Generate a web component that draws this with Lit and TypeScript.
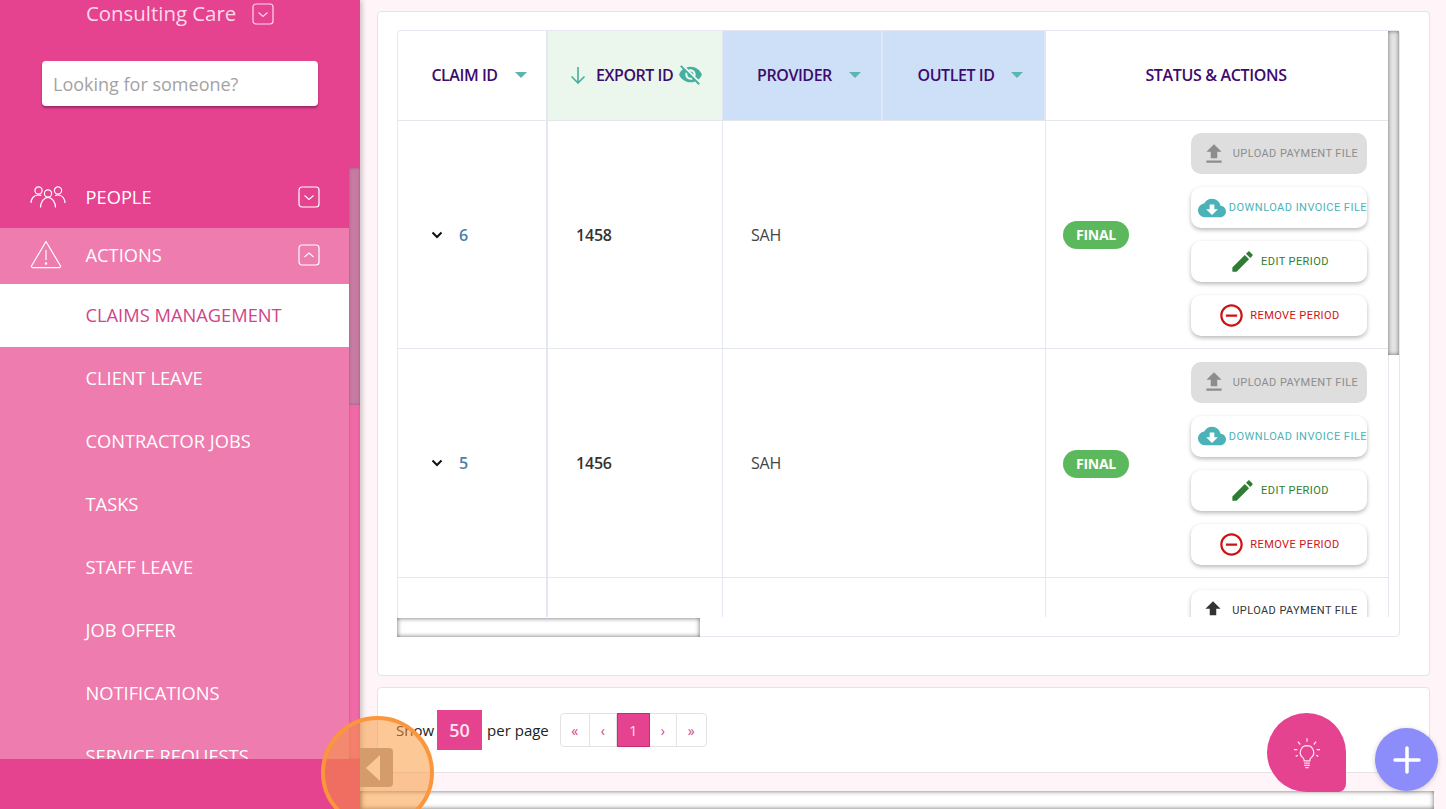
import { LitElement, html, css, svg } from 'lit';
import { customElement } from 'lit/decorators.js';

const ICONS = {
  upload: 'M9 16h6v-6h4l-7-7-7 7h4zm-4 2h14v2H5z',
  cloud: 'M19.35 10.04C18.67 6.59 15.64 4 12 4 9.11 4 6.6 5.64 5.35 8.04 2.34 8.36 0 10.91 0 14c0 3.31 2.69 6 6 6h13c2.76 0 5-2.24 5-5 0-2.64-2.05-4.78-4.65-4.96zM17 13l-5 5-5-5h3V9h4v4h3z',
  edit: 'M3 17.25V21h3.75L17.81 9.94l-3.75-3.75L3 17.25zM20.71 7.04c.39-.39.39-1.02 0-1.41l-2.34-2.34c-.39-.39-1.02-.39-1.41 0l-1.83 1.83 3.75 3.75 1.83-1.83z',
  remove: 'M7 11v2h10v-2H7zm5-9C6.48 2 2 6.48 2 12s4.48 10 10 10 10-4.48 10-10S17.52 2 12 2zm0 18c-4.41 0-8-3.59-8-8s3.59-8 8-8 8 3.59 8 8-3.59 8-8 8z',
  eyeOff: 'M12 7c2.76 0 5 2.24 5 5 0 .65-.13 1.26-.36 1.83l2.92 2.92c1.51-1.26 2.7-2.89 3.43-4.75-1.73-4.39-6-7.5-11-7.5-1.4 0-2.74.25-3.98.7l2.16 2.16C10.74 7.13 11.35 7 12 7zM2 4.27l2.28 2.28.46.46C3.08 8.3 1.78 10.02 1 12c1.73 4.39 6 7.5 11 7.5 1.55 0 3.03-.3 4.38-.84l.42.42L19.73 22 21 20.73 3.27 3 2 4.27zM7.53 9.8l1.55 1.55c-.05.21-.08.43-.08.65 0 1.66 1.34 3 3 3 .22 0 .44-.03.65-.08l1.55 1.55c-.67.33-1.41.53-2.2.53-2.76 0-5-2.24-5-5 0-.79.2-1.53.53-2.2zm4.31-.78l3.15 3.15.02-.16c0-1.66-1.34-3-3-3l-.17.01z',
};

const SUB_ITEMS = ['CLIENT LEAVE', 'CONTRACTOR JOBS', 'TASKS', 'STAFF LEAVE', 'JOB OFFER', 'NOTIFICATIONS', 'SERVICE REQUESTS'];
const ROWS = [
  { claim: '6', exportId: '1458', provider: 'SAH' },
  { claim: '5', exportId: '1456', provider: 'SAH' },
];

const boxIcon = (up: boolean) => html`<svg class="box" viewBox="0 0 22 22" fill="none" stroke="currentColor">
  <rect x="1" y="1" width="20" height="20" rx="3" stroke-width="1.2"></rect>
  <path d=${up ? 'M6.5 13 11 9l4.5 4' : 'M6.5 9.5 11 13.5l4.5-4'} stroke-width="1.1"></path>
</svg>`;

const mat = (name: keyof typeof ICONS, size: number) => html`<svg width=${size} height=${size} viewBox="0 0 24 24" fill="currentColor">${svg`<path d=${ICONS[name]}></path>`}</svg>`;

@customElement('app-root')
export class AppRoot extends LitElement {
  static styles = css`
    :host {
      display: flex;
      width: 1446px;
      height: 809px;
      position: relative;
      overflow: hidden;
      background: #fff5f8;
      font-family: 'Open Sans', sans-serif;
      color: #333;
    }

    /* sidebar */
    .sidebar {
      width: 360px;
      flex: none;
      display: flex;
      flex-direction: column;
      background: #e54290;
      box-shadow: 2px 0 5px rgba(0, 0, 0, 0.22);
      z-index: 1;
    }
    .brand {
      height: 168px;
      flex: none;
      box-sizing: border-box;
      color: #ffd9ea;
    }
    .brand-title {
      display: flex;
      align-items: center;
      gap: 16px;
      padding-left: 86px;
      height: 28px;
      font-size: 20.4px;
    }
    .brand-title span {
      position: relative;
      top: -1px;
    }
    .search {
      margin: 33px 0 0 42px;
      width: 276px;
      height: 45px;
      box-sizing: border-box;
      padding: 0 11px;
      display: flex;
      align-items: center;
      background: #fff;
      border-radius: 4px;
      box-shadow: 0 2px 2px rgba(90, 20, 60, 0.5);
      font-size: 18px;
      color: #a3a3a3;
    }
    .box {
      width: 22px;
      height: 22px;
      flex: none;
    }
    .nav-wrap {
      flex: 1;
      min-height: 0;
      display: flex;
    }
    .nav {
      width: 349px;
      flex: none;
      overflow: hidden;
      color: #fff;
    }
    .group {
      display: flex;
      align-items: center;
      font-size: 18.3px;
      padding-right: 29px;
      box-sizing: border-box;
    }
    .group.people {
      height: 60px;
      padding-bottom: 3px;
    }
    .group.actions {
      height: 56px;
      padding-bottom: 3px;
      background: #ee7cae;
    }
    .group-icon {
      width: 85.5px;
      flex: none;
      display: flex;
      padding-left: 30px;
      box-sizing: border-box;
    }
    .group span {
      flex: 1;
    }
    .sub-list {
      background: #ee7cae;
    }
    .sub {
      height: 63px;
      box-sizing: border-box;
      padding: 0 0 2px 85.5px;
      display: flex;
      align-items: center;
      font-size: 18.3px;
    }
    .sub.active {
      background: #fff;
      color: #d14488;
    }
    .side-scroll {
      width: 11px;
      flex: none;
      background: #f06aa8;
      box-shadow: inset 0 0 3px rgba(170, 60, 110, 0.55);
    }
    .side-thumb {
      height: 237px;
      background: #c77ba2;
      box-shadow: inset 0 0 3px rgba(90, 60, 80, 0.5);
    }
    .side-foot {
      height: 50px;
      flex: none;
      background: #e54290;
    }

    /* main */
    .main {
      flex: 1;
      min-width: 0;
      display: flex;
      flex-direction: column;
    }
    .content {
      flex: 1;
      min-height: 0;
      display: flex;
      flex-direction: column;
      gap: 11px;
      padding: 11px 16px 0 17px;
    }
    .card {
      background: #fff;
      border: 1px solid #e8e2e6;
      border-radius: 4px;
      box-sizing: border-box;
    }
    .table-card {
      height: 665px;
      padding: 18px 29px 0 19px;
    }
    .frame {
      height: 607px;
      border: 1px solid #e4e6f4;
      border-radius: 4px;
      box-sizing: border-box;
      display: grid;
      grid-template-columns: 990px 11px;
      grid-template-rows: 586px 19px;
    }
    .viewport {
      overflow: hidden;
    }
    .row {
      display: grid;
      grid-template-columns: 150px 175px 323px 342px;
      border-bottom: 1px solid #e4e6ee;
    }
    .row.head {
      grid-template-columns: 150px 175px 160px 163px 342px;
      height: 89px;
      color: #3d0a6e;
    }
    .row.body {
      height: 228px;
    }
    .row.head + .row.body {
      height: 227px;
    }
    .cell {
      display: flex;
      align-items: center;
      box-sizing: border-box;
      border-right: 1px solid #e4e6f4;
      font-size: 16px;
      letter-spacing: -0.2px;
    }
    .cell:first-child {
      border-right-width: 2px;
    }
    .cell:last-child {
      border-right: 0;
    }
    .head .cell {
      justify-content: center;
      font-size: 16px;
      font-weight: 600;
      letter-spacing: -0.45px;
      padding-bottom: 2px;
    }
    .head .sortable {
      padding-left: 14px;
    }
    .head .wide {
      letter-spacing: -0.35px;
      padding-right: 2px;
    }
    .head .exported {
      background: #ebf7ec;
      justify-content: flex-start;
      padding-left: 21px;
      gap: 9px;
    }
    .head .filtered {
      background: #cde0f8;
      border-right: 2px solid #e0e6f6;
    }
    .caret {
      width: 0;
      height: 0;
      margin-left: 17px;
      border: 6px solid transparent;
      border-top: 6px solid #5bb5ab;
      border-bottom: 0;
    }
    .teal {
      display: flex;
      color: #45ae9f;
      flex: none;
      margin-left: -4px;
    }
    .claim {
      padding-left: 33px;
      gap: 16px;
      font-weight: 600;
      color: #4b80a8;
    }
    .claim svg {
      flex: none;
    }
    .export {
      padding-left: 28px;
      font-weight: 600;
    }
    .provider {
      padding-left: 28px;
      color: #444;
    }
    .status {
      padding-left: 17px;
      padding-right: 21px;
      justify-content: space-between;
    }
    .badge {
      width: 66px;
      height: 28px;
      margin-top: 1px;
      border-radius: 14px;
      background: #5cb85c;
      color: #fff;
      font-size: 14px;
      font-weight: 700;
      letter-spacing: -0.3px;
      display: flex;
      align-items: center;
      justify-content: center;
      padding-bottom: 1px;
      box-sizing: border-box;
    }
    .actions-col {
      display: flex;
      flex-direction: column;
      gap: 13px;
    }
    .btn {
      width: 176px;
      height: 41px;
      flex: none;
      box-sizing: border-box;
      border-radius: 10px;
      background: #fff;
      box-shadow: 0 2px 4px rgba(0, 0, 0, 0.28);
      display: flex;
      align-items: center;
      justify-content: center;
      gap: 6px;
      font-family: Roboto, sans-serif;
      font-size: 11px;
      letter-spacing: 0.42px;
      white-space: nowrap;
    }
    .btn.disabled {
      background: #dedede;
      box-shadow: none;
      color: #8d8d8d;
      gap: 6px;
      padding-left: 1px;
    }
    .btn.dl {
      color: #4bb3b8;
      justify-content: flex-end;
      gap: 3px;
      overflow: hidden;
      letter-spacing: 0.47px;
    }
    .btn.edit {
      color: #2e7d32;
      gap: 5px;
    }
    .btn.remove {
      color: #cc1414;
      gap: 5px;
    }
    .btn.dark {
      color: #333;
      gap: 6px;
    }
    .cut {
      align-items: flex-start;
      padding-top: 12px;
      justify-content: flex-end;
    }
    .row.last {
      border-bottom: 0;
      height: 50px;
    }
    .v-scroll {
      background: #fff;
      border-left: 1px solid #e4e6ee;
    }
    .v-thumb {
      height: 324px;
      margin-left: -1px;
      background: #e4e4e4;
      box-shadow: inset 0 0 4px rgba(0, 0, 0, 0.55);
    }
    .h-scroll {
      grid-column: 1 / -1;
    }
    .h-thumb {
      width: 303px;
      height: 19px;
      margin: 1px 0 0 -1px;
      background: #fff;
      box-shadow: inset 0 0 5px rgba(0, 0, 0, 0.6);
    }
    .pager-card {
      height: 86px;
      padding-left: 18px;
      display: flex;
      align-items: center;
      font-size: 15px;
      color: #222;
    }
    .size {
      width: 45px;
      height: 40px;
      margin: 0 5px 0 3px;
      background: #e54290;
      color: #ffe3ef;
      font-size: 18px;
      font-weight: 600;
      display: flex;
      align-items: center;
      justify-content: center;
    }
    .pages {
      display: flex;
      margin-left: 11px;
      height: 34px;
      border: 1px solid #e3e3e3;
      border-radius: 4px;
      box-sizing: border-box;
      color: #d14488;
      font-size: 14px;
    }
    .pages div {
      display: flex;
      align-items: center;
      justify-content: center;
      border-right: 1px solid #e3e3e3;
      width: 27px;
      box-sizing: border-box;
    }
    .pages div.end {
      width: 29px;
    }
    .pages div:last-child {
      border-right: 0;
    }
    .pages .cur {
      width: 33px;
      background: #e54290;
      border: 1px solid #c22f74;
      color: #ffe3ef;
      margin: -1px 0;
      height: 34px;
    }
    .bottom-scroll {
      height: 18px;
      flex: none;
      margin-right: 12px;
      background: #fff;
      box-shadow: inset 0 0 5px rgba(0, 0, 0, 0.6);
    }

    /* floating things */
    .toggle {
      position: absolute;
      left: 360px;
      top: 748px;
      width: 33px;
      height: 39px;
      border-radius: 0 4px 4px 0;
      background: #afa4a5;
      display: flex;
      align-items: center;
      padding-left: 6px;
      box-sizing: border-box;
      z-index: 2;
    }
    .toggle i {
      border: 9px solid transparent;
      border-left: 0;
      border-right: 14px solid #fff;
      border-top-width: 13px;
      border-bottom-width: 13px;
    }
    .spot {
      position: absolute;
      left: 321px;
      top: 716px;
      width: 113px;
      height: 113px;
      box-sizing: border-box;
      border: 4px solid #fb963c;
      border-radius: 50%;
      background: rgba(247, 150, 54, 0.52);
      z-index: 3;
    }
    .fab-tip {
      position: absolute;
      left: 1267px;
      top: 713px;
      width: 79px;
      height: 79px;
      border-radius: 50% 50% 8px 50%;
      background: #e54290;
      color: #ffe3ef;
      display: flex;
      align-items: center;
      justify-content: center;
      z-index: 2;
    }
    .fab-add {
      position: absolute;
      left: 1375px;
      top: 728px;
      width: 63px;
      height: 63px;
      border-radius: 50%;
      background: #8c8cfb;
      box-shadow: 0 1px 5px rgba(0, 0, 0, 0.2);
      display: flex;
      align-items: center;
      justify-content: center;
      z-index: 2;
    }
  `;

  private actionButtons() {
    return html`<div class="actions-col">
      <div class="btn disabled">${mat('upload', 26)}UPLOAD PAYMENT FILE</div>
      <div class="btn dl">${mat('cloud', 28)}DOWNLOAD INVOICE FILE</div>
      <div class="btn edit">${mat('edit', 27)}EDIT PERIOD</div>
      <div class="btn remove">${mat('remove', 27)}REMOVE PERIOD</div>
    </div>`;
  }

  private renderRow(r: { claim: string; exportId: string; provider: string }) {
    return html`<div class="row body">
      <div class="cell claim">
        <svg width="12" height="8" viewBox="0 0 12 8" fill="none" stroke="#111" stroke-width="2"><path d="M1.5 1.5 6 6l4.5-4.5"></path></svg>
        ${r.claim}
      </div>
      <div class="cell export">${r.exportId}</div>
      <div class="cell provider">${r.provider}</div>
      <div class="cell status"><div class="badge">FINAL</div>${this.actionButtons()}</div>
    </div>`;
  }

  render() {
    return html`
      <aside class="sidebar">
        <div class="brand">
          <div class="brand-title"><span>Consulting Care</span>${boxIcon(false)}</div>
          <div class="search">Looking for someone?</div>
        </div>
        <div class="nav-wrap">
          <nav class="nav">
            <div class="group people">
              <div class="group-icon">
                <svg width="36" height="22" viewBox="0 0 36 22" fill="none" stroke="#fff" stroke-width="1.2">
                  <circle cx="8.500" cy="4.500" r="3.600"></circle><circle cx="18" cy="7.500" r="3.600"></circle><circle cx="28" cy="4.500" r="3.600"></circle>
                  <path d="M1 17c0-4 2.500-8 7.500-8 1 0 2 .2 2.800.6M35 17c0-4-2.500-8-7-8-1 0-2 .2-2.800.6M10.500 21.500c0-5 3-10 7.500-10s7.500 5 7.500 10"></path>
                </svg>
              </div>
              <span>PEOPLE</span>${boxIcon(false)}
            </div>
            <div class="group actions">
              <div class="group-icon">
                <svg width="32" height="29" viewBox="0 0 32 29" fill="none" stroke="#fff" stroke-width="1.2" stroke-linejoin="round">
                  <path d="M16 1.500 30.500 26a1.200 1.200 0 0 1-1 1.600H2.500a1.200 1.200 0 0 1-1-1.600z"></path>
                  <path d="M16 10v10"></path><circle cx="16" cy="23.500" r=".7" fill="#fff"></circle>
                </svg>
              </div>
              <span>ACTIONS</span>${boxIcon(true)}
            </div>
            <div class="sub-list">
              <div class="sub active">CLAIMS MANAGEMENT</div>
              ${SUB_ITEMS.map((s) => html`<div class="sub">${s}</div>`)}
            </div>
          </nav>
          <div class="side-scroll"><div class="side-thumb"></div></div>
        </div>
        <div class="side-foot"></div>
      </aside>

      <main class="main">
        <div class="content">
          <section class="card table-card">
            <div class="frame">
              <div class="viewport">
                <div class="row head">
                  <div class="cell sortable">CLAIM ID<i class="caret"></i></div>
                  <div class="cell exported">
                    <svg width="18" height="18" viewBox="0 0 18 18" fill="none" stroke="#45ae9f" stroke-width="1.600"><path d="M9 1v16M2.500 10.500 9 17l6.500-6.500"></path></svg>
                    <span>EXPORT ID</span>
                    <span class="teal">${mat('eyeOff', 25)}</span>
                  </div>
                  <div class="cell filtered sortable">PROVIDER<i class="caret"></i></div>
                  <div class="cell filtered sortable">OUTLET ID<i class="caret"></i></div>
                  <div class="cell wide">STATUS &amp; ACTIONS</div>
                </div>
                ${ROWS.map((r) => this.renderRow(r))}
                <div class="row last">
                  <div class="cell"></div>
                  <div class="cell"></div>
                  <div class="cell"></div>
                  <div class="cell status cut">
                    <div class="btn dark">${mat('upload', 26)}UPLOAD PAYMENT FILE</div>
                  </div>
                </div>
              </div>
              <div class="v-scroll"><div class="v-thumb"></div></div>
              <div class="h-scroll"><div class="h-thumb"></div></div>
            </div>
          </section>
          <section class="card pager-card">
            Show
            <div class="size">50</div>
            per page
            <div class="pages">
              <div class="end">«</div><div>‹</div><div class="cur">1</div><div>›</div><div class="end">»</div>
            </div>
          </section>
        </div>
        <div class="bottom-scroll"></div>
      </main>

      <div class="toggle"><i></i></div>
      <div class="spot"></div>
      <div class="fab-tip">
        <svg width="34" height="34" viewBox="0 0 30 30" fill="none" stroke="currentColor" stroke-width="1.100">
          <path d="M15 8.500a6 6 0 0 0-3.500 10.800c.8.700 1 1.500 1 2.700h5c0-1.200.2-2 1-2.700A6 6 0 0 0 15 8.500z"></path>
          <path d="M12.500 24h5M12.500 26h5M13.500 28h3M15 2v3M7 5l2 2.500M23 5l-2 2.500M3.500 12H6.500M26.500 12h-3M5 18l2-1M25 18l-2-1"></path>
        </svg>
      </div>
      <div class="fab-add">
        <svg width="28" height="28" viewBox="0 0 28 28" stroke="#fff" stroke-width="3.500" stroke-linecap="round"><path d="M14 2v24M2 14h24"></path></svg>
      </div>
    `;
  }
}
